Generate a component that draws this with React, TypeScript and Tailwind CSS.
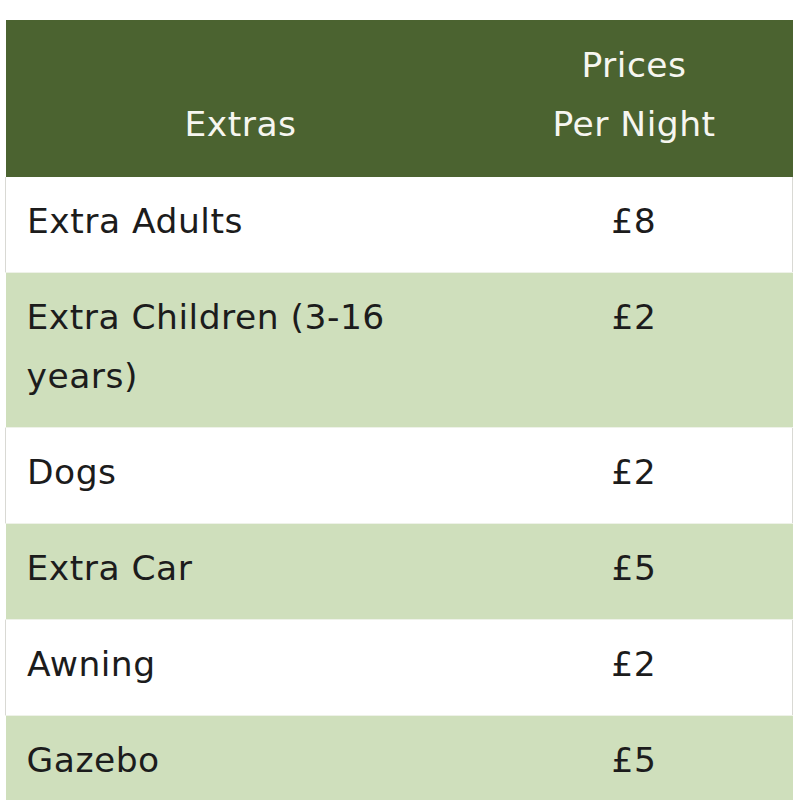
const rows: { label: string; price: string }[] = [
  { label: 'Extra Adults', price: '£8' },
  { label: 'Extra Children (3-16 years)', price: '£2' },
  { label: 'Dogs', price: '£2' },
  { label: 'Extra Car', price: '£5' },
  { label: 'Awning', price: '£2' },
  { label: 'Gazebo', price: '£5' },
];

export default function App() {
  return (
    <div className="min-h-screen bg-white pl-[5px] pt-5 font-['DejaVu_Sans',sans-serif]">
      <table className="w-[788px] border-collapse text-[34.5px] leading-[59px] tracking-[0.5px]">
        <thead>
          <tr className="bg-[#4b6330] text-[#f6f6f0]">
            <th className="w-[470px] px-[21px] pt-[15.5px] pb-[23.5px] align-bottom font-normal">Extras</th>
            <th className="px-[21px] pt-[15.5px] pb-[23.5px] align-bottom font-normal">
              Prices
              <br />
              Per Night
            </th>
          </tr>
        </thead>
        <tbody>
          {rows.map((row, i) => (
            <tr
              key={row.label}
              className={`border-b border-[#eef2e8] text-[#1c1c1c] ${
                i % 2 === 0 ? 'border-x border-x-[#d9d9d4] bg-white' : 'bg-[#cfdfbc]'
              }`}
            >
              <td className="w-[470px] px-[21px] pt-[14.5px] pb-[21.5px] align-top">
                <div className="max-w-[380px]">{row.label}</div>
              </td>
              <td className="px-[21px] pt-[14.5px] pb-[21.5px] text-center align-top">{row.price}</td>
            </tr>
          ))}
        </tbody>
      </table>
    </div>
  );
}
